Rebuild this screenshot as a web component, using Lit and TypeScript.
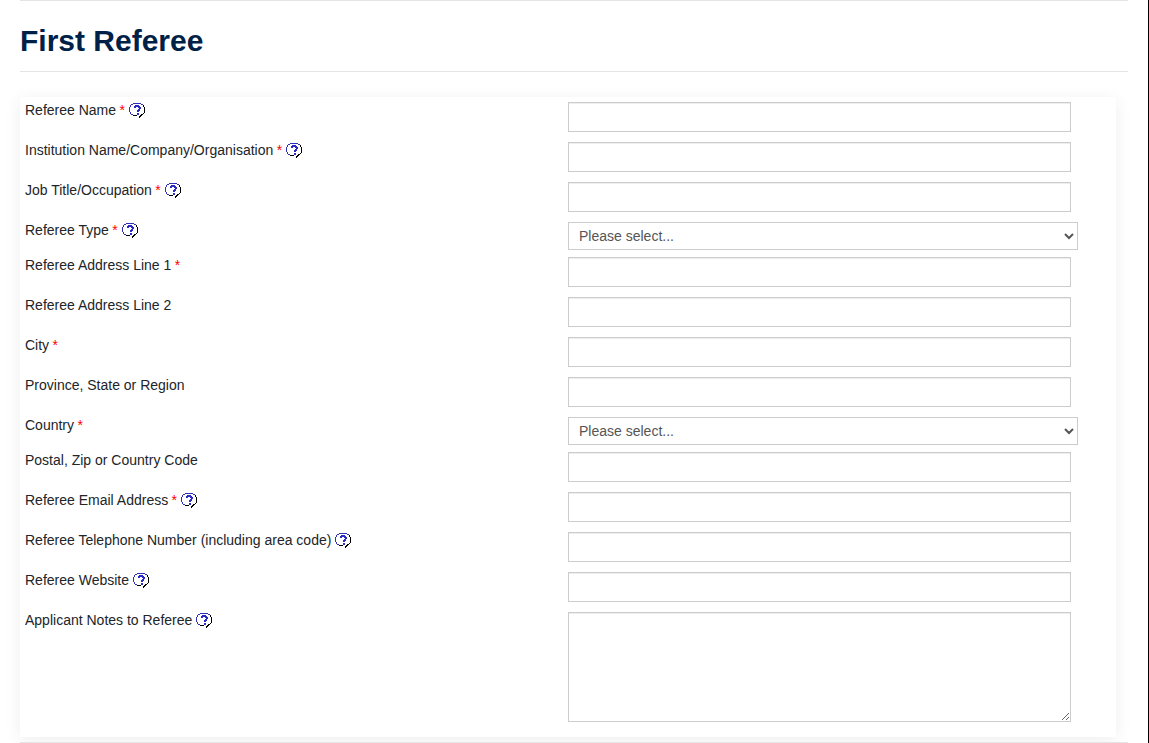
import { LitElement, html, css, svg } from "lit";
import { customElement } from "lit/decorators.js";

type Row = { label: string; req?: boolean; help?: boolean; kind?: "input" | "select" | "area" };

const rows: Row[] = [
  { label: "Referee Name", req: true, help: true },
  { label: "Institution Name/Company/Organisation", req: true, help: true },
  { label: "Job Title/Occupation", req: true, help: true },
  { label: "Referee Type", req: true, help: true, kind: "select" },
  { label: "Referee Address Line 1", req: true },
  { label: "Referee Address Line 2" },
  { label: "City", req: true },
  { label: "Province, State or Region" },
  { label: "Country", req: true, kind: "select" },
  { label: "Postal, Zip or Country Code" },
  { label: "Referee Email Address", req: true, help: true },
  { label: "Referee Telephone Number (including area code)", help: true },
  { label: "Referee Website", help: true },
  { label: "Applicant Notes to Referee", help: true, kind: "area" },
];

const bitmap = [
  "....BBBBBBBB....",
  "..BB........BB..",
  ".B....QQQQ....K.",
  ".B...QQQQQQ...K.",
  "B....QQ..QQQ...K",
  "B.........QQ...K",
  "B........QQ....K",
  "B.......QQQ....K",
  "B.......QQ.....K",
  ".B.............K",
  ".B......QQ....K.",
  "..BB....QQ..KK..",
  "....KKKK...KK...",
  "..........KK....",
  "..........K.....",
];
const colors: Record<string, string> = { B: "#2f2fb4", Q: "#2a2ac4", K: "#000" };
const pixelPath = (ch: string) =>
  bitmap
    .flatMap((line, y) =>
      [...line].map((c, x) => (c === ch ? `M${x} ${y}h1v1h-1z` : ""))
    )
    .join("");

const helpIcon = svg`<svg class="help" width="16" height="16" viewBox="0 0 16 16" shape-rendering="crispEdges" aria-hidden="true">
  ${Object.keys(colors).map((c) => svg`<path d=${pixelPath(c)} fill=${colors[c]}/>`)}
</svg>`;

@customElement("app-root")
export class AppRoot extends LitElement {
  static styles = css`
    :host {
      display: block;
      height: 743px;
      overflow: hidden;
      box-sizing: border-box;
      background: #fff;
      border-right: 1px solid #000;
      font-family: "Liberation Sans", Arial, sans-serif;
      font-size: 14px;
      color: #212529;
    }
    .page {
      width: 1108px;
      margin-left: 20px;
    }
    .rule {
      height: 1px;
      background: #e4e4e4;
    }
    h1 {
      margin: 0;
      height: 70px;
      box-sizing: border-box;
      padding-top: 22px;
      font-size: 30px;
      line-height: 36px;
      font-weight: 700;
      color: #002147;
    }
    .panel {
      width: 1096px;
      height: 640px;
      margin: 25px 0 5px;
      box-sizing: border-box;
      padding: 5px 0 0 5px;
      background: #fff;
      box-shadow: 0 3px 16px rgba(0, 0, 0, 0.07);
    }
    .row {
      display: flex;
      align-items: flex-start;
      margin-bottom: 10px;
    }
    .row.sel {
      margin-bottom: 7px;
    }
    .label {
      width: 543px;
      flex: none;
      line-height: 16px;
      color: #212529;
      display: flex;
      align-items: flex-start;
      height: 16px;
    }
    .req {
      color: #f00;
      margin-left: 3.4px;
    }
    .help {
      flex: none;
      margin-left: 3.9px;
      margin-top: 1px;
    }
    .field {
      box-sizing: border-box;
      display: block;
      margin: 0;
      width: 503px;
      height: 30px;
      border: 1px solid #ccc;
      border-radius: 0;
      background: #fff;
      outline: none;
      padding: 0 10px;
      font: 14px "Liberation Sans", Arial, sans-serif;
      color: #555;
      box-shadow: inset 0 1px 1px rgba(0, 0, 0, 0.075);
    }
    select.field {
      width: 510px;
      height: 28px;
      padding: 0 6px;
      box-shadow: none;
    }
    textarea.field {
      height: 110px;
      resize: vertical;
    }
  `;

  private control(r: Row) {
    if (r.kind === "select")
      return html`<select class="field"><option>Please select...</option></select>`;
    if (r.kind === "area") return html`<textarea class="field"></textarea>`;
    return html`<input class="field" type="text" />`;
  }

  render() {
    return html`<div class="page">
      <div class="rule"></div>
      <h1>First Referee</h1>
      <div class="rule"></div>
      <div class="panel">
        ${rows.map(
          (r) => html`<div class="row ${r.kind === "select" ? "sel" : ""}">
            <div class="label">
              <span>${r.label}</span>${r.req ? html`<span class="req">*</span>` : ""}${r.help ? helpIcon : ""}
            </div>
            ${this.control(r)}
          </div>`
        )}
      </div>
      <div class="rule"></div>
    </div>`;
  }
}
